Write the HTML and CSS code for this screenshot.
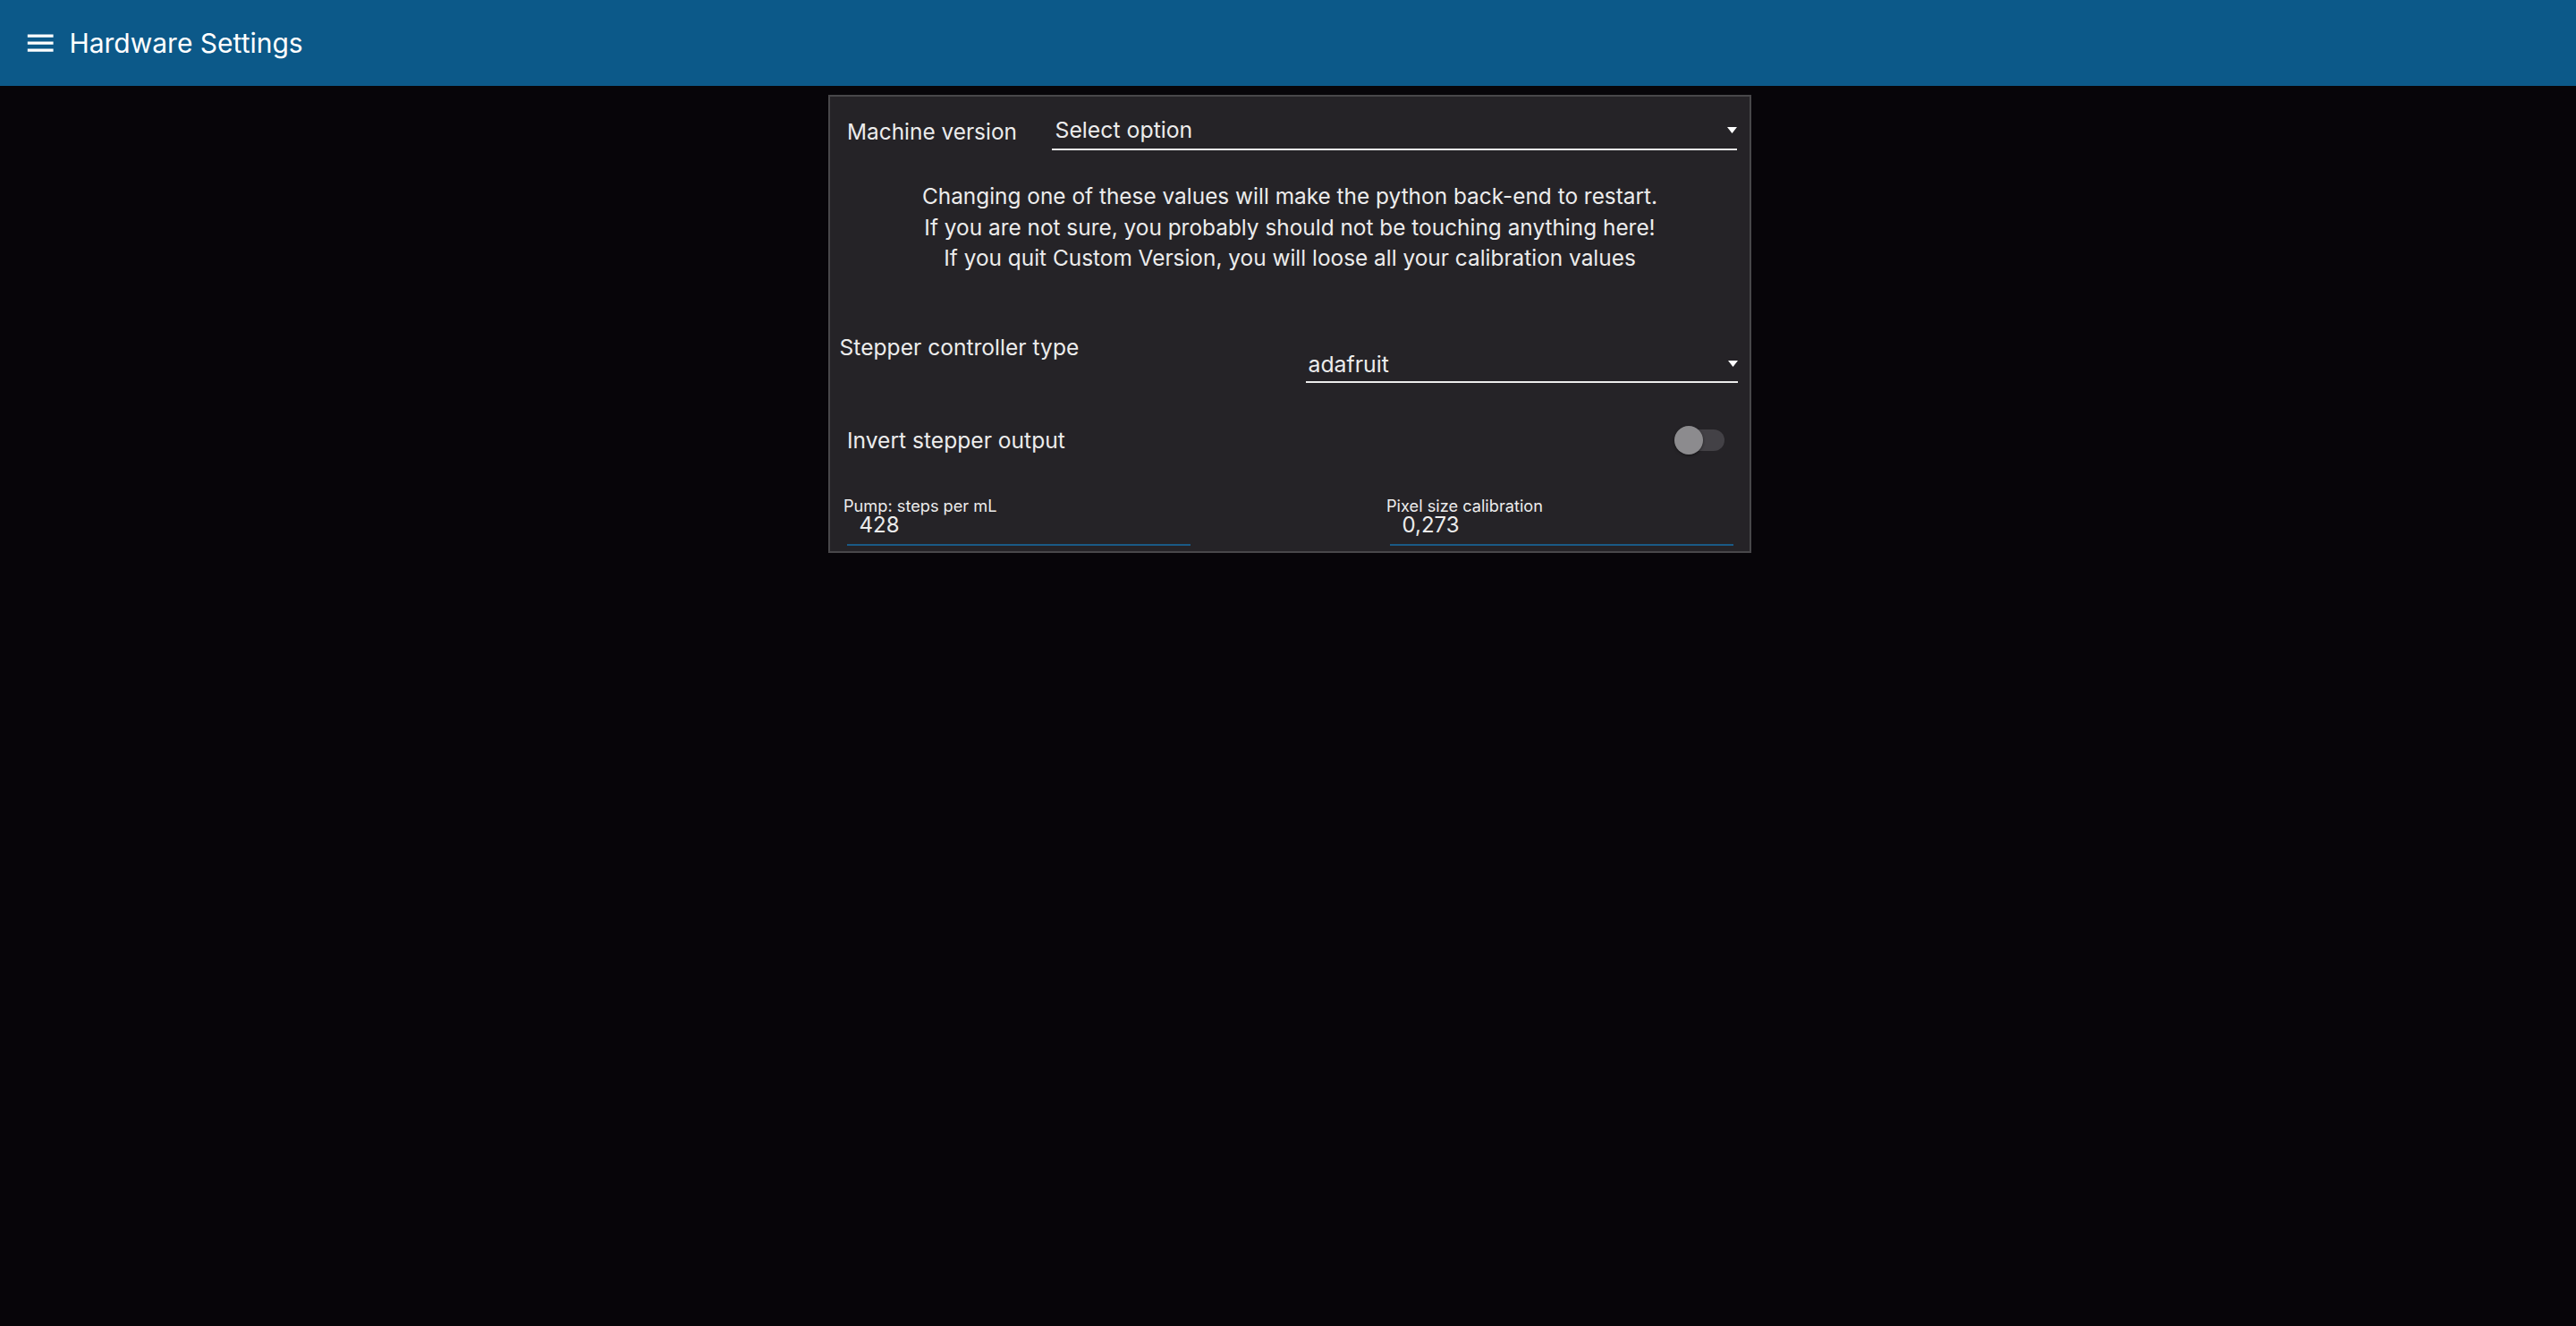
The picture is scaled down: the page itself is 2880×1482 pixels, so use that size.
FILE: index.html
```html
<!DOCTYPE html>
<html lang="en">
<head>
<meta charset="utf-8">
<title>Hardware Settings</title>
<link rel="stylesheet" href="styles.css">
</head>
<body>
<header class="topbar">
  <svg class="menu-icon" viewBox="0 0 24 24" aria-hidden="true"><path d="M3 18h18v-2H3v2zm0-5h18v-2H3v2zm0-7v2h18V6H3z"/></svg>
  <h1 class="title">Hardware Settings</h1>
</header>
<main class="main">
  <section class="panel">
    <div class="row-machine">
      <span class="mv-label">Machine version</span>
      <div class="select select-machine">
        <span class="select-text">Select option</span>
        <svg class="caret" viewBox="0 0 11 7"><path d="M0 0h11L5.5 7z"/></svg>
      </div>
    </div>
    <p class="message">Changing one of these values will make the python back-end to restart.<br>If you are not sure, you probably should not be touching anything here!<br>If you quit Custom Version, you will loose all your calibration values</p>
    <div class="row-stepper">
      <span class="st-label">Stepper controller type</span>
      <div class="select select-stepper">
        <span class="select-text">adafruit</span>
        <svg class="caret" viewBox="0 0 11 7"><path d="M0 0h11L5.5 7z"/></svg>
      </div>
    </div>
    <div class="row-invert">
      <span class="inv-label">Invert stepper output</span>
      <div class="toggle"><span class="toggle-knob"></span></div>
    </div>
    <div class="fields">
      <div class="field field-left">
        <span class="field-label">Pump: steps per mL</span>
        <span class="field-value">428</span>
        <span class="field-line"></span>
      </div>
      <div class="field field-right">
        <span class="field-label">Pixel size calibration</span>
        <span class="field-value">0,273</span>
        <span class="field-line"></span>
      </div>
    </div>
  </section>
</main>
</body>
</html>
```

FILE: styles.css
```css
html, body {
  margin: 0;
  padding: 0;
}
body {
  background: #070509;
  color: #ececec;
  font-family: Inter, "Noto Sans", sans-serif;
  min-height: 1482px;
}
.topbar {
  height: 96px;
  background: #0c5989;
  display: flex;
  align-items: center;
  padding-left: 26px;
  box-sizing: border-box;
}
.menu-icon {
  width: 38.4px;
  height: 38.4px;
  fill: #ffffff;
  flex: none;
}
.title {
  margin: 0 0 0 13px;
  font-size: 30px;
  font-weight: 400;
  color: #ffffff;
  line-height: 1;
}
.main {
  display: flex;
  justify-content: center;
  padding: 10px 0 0 4px;
}
.panel {
  width: 1032px;
  box-sizing: border-box;
  border: 2px solid #48474a;
  background: #252327;
  padding-bottom: 6px;
}
.row-machine {
  display: flex;
  align-items: flex-start;
  padding: 10px 14px 0 19px;
}
.mv-label {
  width: 229px;
  flex: none;
  font-size: 24.4px;
  line-height: 36px;
  margin-top: 10.5px;
}
.select {
  display: flex;
  align-items: center;
  justify-content: space-between;
  box-sizing: content-box;
  border-bottom: 2px solid #ececec;
  font-size: 24.8px;
}
.select-machine {
  flex: 1;
  height: 42px;
  padding: 6px 0 0 3.5px;
}
.select-text {
  line-height: 36px;
}
.caret {
  width: 11px;
  height: 7px;
  fill: #ffffff;
  flex: none;
}
.message {
  margin: 34px 0 0;
  text-align: center;
  font-size: 24.4px;
  line-height: 34.5px;
}
.row-stepper {
  display: flex;
  align-items: flex-start;
  justify-content: space-between;
  padding: 0 13px 0 10.6px;
  margin-top: 64.5px;
}
.st-label {
  font-size: 24.6px;
  line-height: 36px;
}
.select-stepper {
  width: 480.5px;
  height: 39px;
  padding: 17px 0 0 2.5px;
}
.row-invert {
  display: flex;
  align-items: center;
  justify-content: space-between;
  height: 56px;
  margin-top: 36px;
  padding: 0 28px 0 19px;
}
.inv-label {
  font-size: 24.6px;
  line-height: 36px;
}
.toggle {
  position: relative;
  width: 56px;
  height: 24px;
  border-radius: 12px;
  background: #434146;
}
.toggle-knob {
  position: absolute;
  left: 0;
  top: -4px;
  width: 32px;
  height: 32px;
  border-radius: 50%;
  background: #8c8b8e;
  box-shadow: 0 1px 3px rgba(0, 0, 0, 0.5);
}
.fields {
  display: grid;
  grid-template-columns: 607px 1fr;
  padding: 36px 0 0 15px;
}
.field {
  display: flex;
  flex-direction: column;
  align-items: flex-start;
}
.field-label {
  font-size: 18.2px;
  line-height: 18px;
}
.field-value {
  font-size: 24px;
  line-height: 20px;
  margin-top: 2.5px;
  padding-left: 17.5px;
}
.field-line {
  display: block;
  width: 384px;
  height: 2px;
  margin: 11.5px 0 0 4px;
  background: #1a5a86;
}
```
